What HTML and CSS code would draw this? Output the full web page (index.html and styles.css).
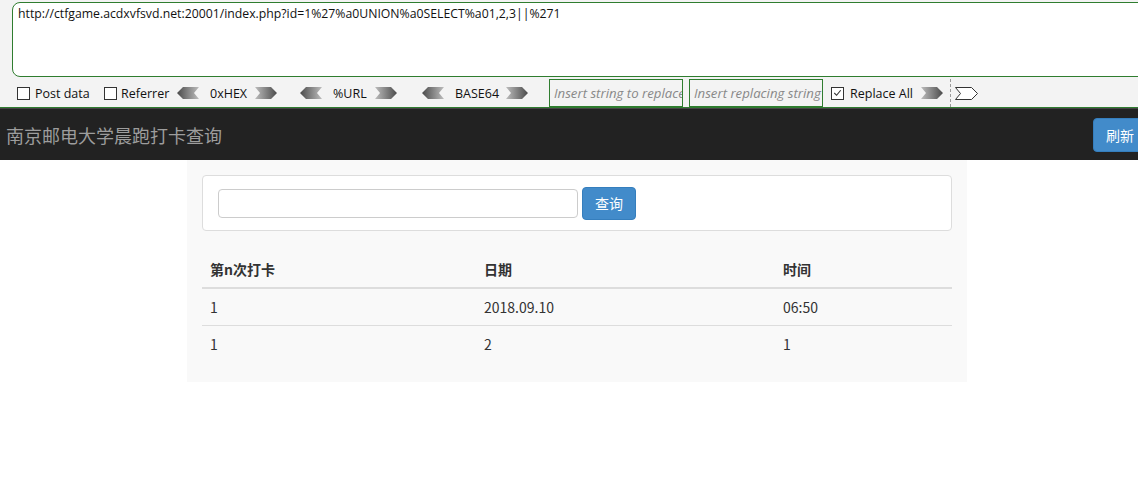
FILE: index.html
```html
<!DOCTYPE html>
<html lang="zh">
<head>
<meta charset="utf-8">
<title>南京邮电大学晨跑打卡查询</title>
<link rel="stylesheet" href="styles.css">
</head>
<body>
<div class="hackbar">
  <div class="urlbox">http://ctfgame.acdxvfsvd.net:20001/index.php?id=1%27%a0UNION%a0SELECT%a01,2,3||%271</div>
  <div class="tools">
    <label class="chk chk-post"><span class="box"></span>Post data</label>
    <label class="chk chk-ref"><span class="box"></span>Referrer</label>
    <span class="enc enc-hex">
      <svg class="arr" viewBox="0 0 22 12" width="22" height="12"><defs><linearGradient id="gl" x1="0" y1="0" x2="1" y2="0"><stop offset="0" stop-color="#4a4a4a"/><stop offset="1" stop-color="#bdbdbd"/></linearGradient></defs><polygon points="0,6 6,0 22,0 17,6 22,12 6,12" fill="url(#gl)"/></svg>
      <span class="enc-t">0xHEX</span>
      <svg class="arr" viewBox="0 0 22 12" width="22" height="12"><defs><linearGradient id="gr" x1="0" y1="0" x2="1" y2="0"><stop offset="0" stop-color="#bdbdbd"/><stop offset="1" stop-color="#4a4a4a"/></linearGradient></defs><polygon points="0,0 16,0 22,6 16,12 0,12 5,6" fill="url(#gr)"/></svg>
    </span>
    <span class="enc enc-url">
      <svg class="arr" viewBox="0 0 22 12" width="22" height="12"><polygon points="0,6 6,0 22,0 17,6 22,12 6,12" fill="url(#gl)"/></svg>
      <span class="enc-t">%URL</span>
      <svg class="arr" viewBox="0 0 22 12" width="22" height="12"><polygon points="0,0 16,0 22,6 16,12 0,12 5,6" fill="url(#gr)"/></svg>
    </span>
    <span class="enc enc-b64">
      <svg class="arr" viewBox="0 0 22 12" width="22" height="12"><polygon points="0,6 6,0 22,0 17,6 22,12 6,12" fill="url(#gl)"/></svg>
      <span class="enc-t">BASE64</span>
      <svg class="arr" viewBox="0 0 22 12" width="22" height="12"><polygon points="0,0 16,0 22,6 16,12 0,12 5,6" fill="url(#gr)"/></svg>
    </span>
    <span class="field">Insert string to replace</span>
    <span class="field">Insert replacing string</span>
    <label class="chk chk-on"><span class="box"><svg viewBox="0 0 12 12" width="12" height="12"><polyline points="2.5,6 5,8.5 9.5,3" fill="none" stroke="#333" stroke-width="1.2"/></svg></span>Replace All</label>
    <svg class="arr go" viewBox="0 0 22 12" width="22" height="12"><polygon points="0,0 16,0 22,6 16,12 0,12 5,6" fill="url(#gr)"/></svg>
    <span class="sep"></span>
    <svg class="arr" viewBox="0 0 23 13" width="23" height="13"><polygon points="0.5,0.5 16.5,0.5 22.5,6.5 16.5,12.5 0.5,12.5 5.5,6.5" fill="#fff" stroke="#333" stroke-width="1"/></svg>
  </div>
</div>

<nav class="navbar">
  <span class="brand">南京邮电大学晨跑打卡查询</span>
  <button class="btn btn-refresh">刷新</button>
</nav>

<div class="container">
  <div class="well">
    <input class="q-input" type="text">
    <button class="btn btn-query">查询</button>
  </div>
  <table class="tbl">
    <thead>
      <tr><th class="c1">第n次打卡</th><th class="c2">日期</th><th>时间</th></tr>
    </thead>
    <tbody>
      <tr><td>1</td><td>2018.09.10</td><td>06:50</td></tr>
      <tr><td>1</td><td>2</td><td>1</td></tr>
    </tbody>
  </table>
</div>
</body>
</html>
```

FILE: styles.css
```css
* { box-sizing: border-box; }
html, body { margin: 0; padding: 0; background: #fff; }
body {
  font-family: "Noto Sans CJK SC", "Noto Sans", sans-serif;
  overflow: hidden;
}

.hackbar {
  background: #f3f3f3;
  padding-top: 2px;
  border-bottom: 1px solid #2f7d2f;
  font-family: "Open Sans", "Noto Sans", sans-serif;
  color: #111;
  overflow: hidden;
}
.urlbox {
  margin-left: 12px;
  margin-right: -12px;
  height: 75px;
  background: #fff;
  border: 1px solid #2f7d2f;
  border-radius: 8px 0 0 8px;
  padding: 3px 5px;
  font-size: 12.25px;
  line-height: 16px;
  white-space: nowrap;
}
.tools {
  display: flex;
  align-items: center;
  height: 30px;
  padding-top: 2px;
  padding-left: 17px;
  font-size: 12.5px;
}
.chk {
  display: flex;
  align-items: center;
}
.chk-post { width: 87px; }
.chk-ref { width: 73px; }
.box {
  width: 13px;
  height: 13px;
  border: 1px solid #333;
  background: #fff;
  margin-right: 4px;
  display: flex;
  align-items: center;
  justify-content: center;
}
.chk-post .box { margin-right: 5px; }
.chk-on { margin-left: 8px; }
.chk-on .box { margin-right: 6px; }
.enc {
  display: flex;
  align-items: center;
  justify-content: space-between;
}
.enc-hex { width: 100px; margin-right: 23px; }
.enc-url { width: 97px; margin-right: 25px; }
.enc-b64 { width: 106px; margin-right: 21px; }
.enc-t { margin-left: 11px; margin-right: auto; }
.arr { display: block; }
.field {
  width: 134px;
  height: 28px;
  border: 1px solid #2f7d2f;
  background: #f3f3f3;
  color: #888;
  font-style: italic;
  padding: 0 4px;
  line-height: 26px;
  white-space: nowrap;
  overflow: hidden;
  margin-right: 6px;
  font-size: 13.2px;
}
.field + .field { margin-right: 0; }
.go { margin-left: 8px; }
.sep {
  width: 0;
  height: 28px;
  border-left: 1px dashed #999;
  margin: 0 4px 0 7px;
}

.navbar {
  display: flex;
  align-items: center;
  justify-content: space-between;
  height: 52px;
  background: #222;
  border-top: 1px solid #444;
  overflow: hidden;
  padding-left: 6px;
}
.brand {
  color: #9d9d9d;
  font-size: 18px;
}
.btn {
  font-family: "Noto Sans CJK SC", sans-serif;
  background: #428bca;
  border: 1px solid #357ebd;
  color: #fff;
  font-size: 14px;
  border-radius: 4px;
  cursor: pointer;
}
.btn-refresh {
  height: 34px;
  padding: 0 12px;
  margin-right: -9px;
}

.container {
  width: 780px;
  margin-left: 187px;
  background: #f9f9f9;
  padding: 15px 15px 20px;
}
.well {
  background: #fff;
  border: 1px solid #ddd;
  border-radius: 4px;
  height: 56px;
  display: flex;
  align-items: center;
  padding-left: 15px;
  margin-bottom: 20px;
}
.q-input {
  width: 360px;
  height: 29px;
  border: 1px solid #ccc;
  border-radius: 4px;
  margin-right: 4px;
}
.btn-query {
  height: 33px;
  width: 54px;
  padding: 0;
}

.tbl {
  width: 100%;
  border-collapse: collapse;
  font-size: 14px;
  color: #333;
}
.tbl th, .tbl td {
  text-align: left;
  padding: 8px;
  line-height: 20px;
}
.tbl th {
  font-weight: bold;
  border-bottom: 2px solid #ddd;
}
.tbl td { border-top: 1px solid #ddd; }
.tbl thead + tbody tr:first-child td { border-top: 0; }
.tbl .c1 { width: 274px; }
.tbl .c2 { width: 299px; }
```
